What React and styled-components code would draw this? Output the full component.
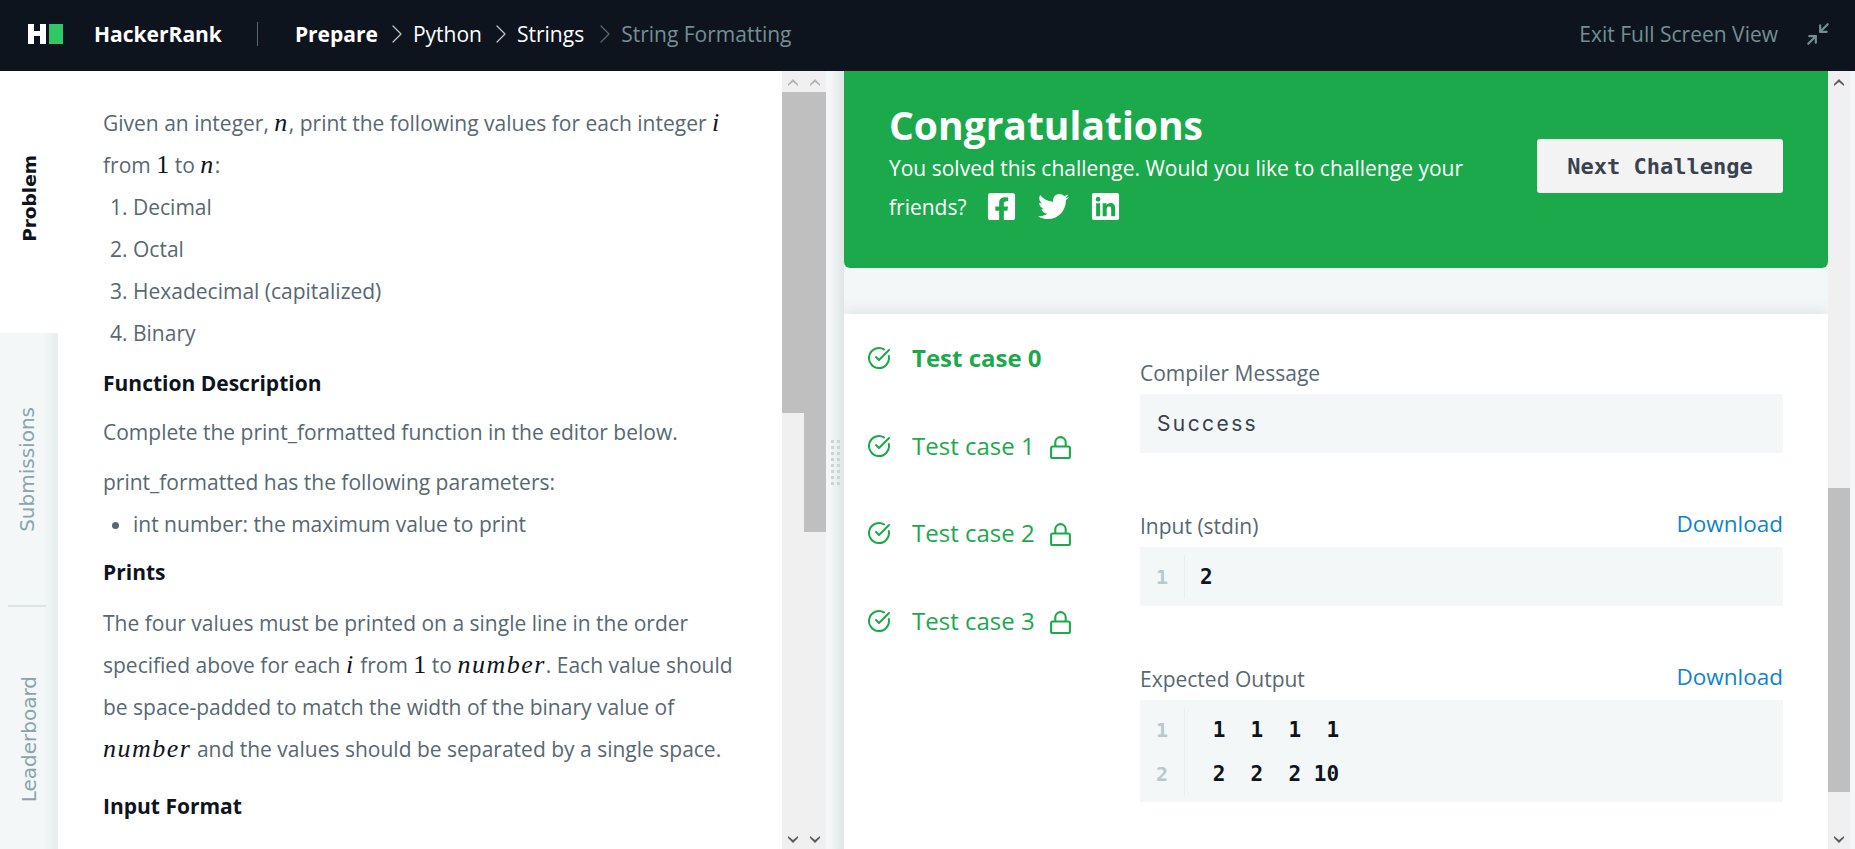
import React from 'react';
import styled, { createGlobalStyle } from 'styled-components';
import { CircleCheckBig, Minimize2, ChevronRight } from 'lucide-react';
import { FaFacebookSquare, FaTwitter, FaLinkedin } from 'react-icons/fa';

const GlobalStyle = createGlobalStyle`
  html, body {
    margin: 0;
    padding: 0;
    height: 100%;
    overflow: hidden;
    background: #f3f7f7;
    font-family: 'Open Sans', sans-serif;
  }
  * { box-sizing: border-box; }
`;

const Page = styled.div`
  display: flex;
  flex-direction: column;
  width: 1855px;
  height: 849px;
  overflow: hidden;
`;

const Header = styled.header`
  flex: 0 0 71px;
  display: flex;
  align-items: center;
  padding: 0 24px 3px 28px;
  background: #0e141e;
  font-size: 21px;
`;

const LogoMark = styled.svg`
  width: 36px;
  height: 20px;
  margin-right: 30px;
`;

const Brand = styled.span`
  font-size: 21px;
  font-weight: 700;
  color: #fff;
`;

const Sep = styled.span`
  width: 1px;
  height: 24px;
  margin: 0 37px 0 35px;
  background: #576871;
`;

const Crumb = styled.span`
  font-weight: ${p => (p.$bold ? 700 : 400)};
  color: ${p => (p.$muted ? '#738f93' : '#fff')};
`;

const CrumbArrow = styled(ChevronRight)`
  width: 32px;
  height: 32px;
  margin: 0 0 0 ${p => (p.$muted ? 5 : 3)}px;
  color: ${p => (p.$muted ? '#576871' : '#b7c9cc')};
  stroke-width: 0.9;
`;

const ExitLink = styled.span`
  margin-left: auto;
  color: #738f93;
`;

const ExitIcon = styled(Minimize2)`
  width: 26px;
  height: 26px;
  margin-left: 27px;
  color: #738f93;
`;

const Main = styled.div`
  flex: 1;
  display: flex;
  min-height: 0;
`;

const Tabs = styled.nav`
  flex: 0 0 58px;
  display: flex;
  flex-direction: column;
  overflow: hidden;
  background: linear-gradient(90deg, #f3f7f7 75%, #e7eced);
`;

const Tab = styled.div`
  flex: 0 0 ${p => p.$h}px;
  display: flex;
  align-items: center;
  justify-content: center;
  padding-bottom: ${p => (p.$active ? 7 : 0)}px;
  background: ${p => (p.$active ? '#fff' : 'transparent')};
  border-bottom: ${p => (p.$divider ? '2px solid #dbe5e6' : '0')};
  margin: ${p => (p.$divider ? '0 12px 0 8px' : '0')};
`;

const TabLabel = styled.span`
  writing-mode: vertical-rl;
  transform: rotate(180deg);
  font-family: 'DejaVu Sans', sans-serif;
  font-size: ${p => (p.$active ? 18.5 : 20)}px;
  font-weight: ${p => (p.$active ? 700 : 400)};
  color: ${p => (p.$active ? '#0e141e' : '#8aa5a9')};
`;

const Problem = styled.section`
  flex: 0 0 724px;
  padding: 31px 0 0 45px;
  background: #fff;
  overflow: hidden;
  font-size: 21px;
  line-height: 42px;
  color: #576871;
`;

const Para = styled.p`
  margin: 0 ${p => p.$right || 0}px ${p => p.$after || 0}px 0;
`;

const Heading = styled.h3`
  margin: ${p => p.$top || 0}px 0 ${p => p.$after || 0}px;
  font-size: 21px;
  line-height: 42px;
  font-weight: 700;
  color: #0e141e;
`;

const Steps = styled.ol`
  margin: 0;
  padding: 0 0 0 30px;
`;

const Bullets = styled.ul`
  margin: 0;
  padding: 0 0 0 30px;
`;

const Math = styled.i`
  font-family: 'Liberation Serif', serif;
  font-size: 26px;
  letter-spacing: ${p => (p.$upright ? 0 : 1.5)}px;
  font-style: ${p => (p.$upright ? 'normal' : 'italic')};
  color: #0e141e;
`;

const ScrollTrack = styled.div`
  flex: 0 0 22px;
  display: flex;
  flex-direction: column;
  background: #f0f0f0;
`;

const ScrollButton = styled.svg`
  flex: 0 0 21px;
  width: 22px;
  height: 21px;
  fill: ${p => (p.$dim ? '#b4b4b4' : '#5a5a5a')};
`;

const Thumb = styled.div`
  flex: 0 0 ${p => p.$h}px;
  margin-top: ${p => p.$top || 0}px;
  background: #bfbfbf;
`;

const Filler = styled.div`
  flex: 1;
`;

const Splitter = styled.div`
  flex: 0 0 18px;
  display: flex;
  align-items: center;
  justify-content: center;
  padding-top: 4px;
  background: linear-gradient(90deg, #f3f7f7 22%, #dfe4e5);
`;

const Grip = styled.div`
  display: grid;
  grid-template-columns: repeat(2, 3px);
  gap: 3px;
`;

const GripDot = styled.span`
  width: 3px;
  height: 3px;
  background: #cfd3d4;
`;

const Result = styled.section`
  flex: 0 0 984px;
  display: flex;
  flex-direction: column;
  overflow: hidden;
  background: #f3f7f7;
`;

const Banner = styled.div`
  flex: 0 0 197px;
  display: flex;
  align-items: flex-start;
  justify-content: space-between;
  padding: 30px 45px 0 45px;
  background: #1ba94c;
  border-radius: 0 0 6px 6px;
  color: #fff;
`;

const BannerText = styled.div`
  width: 600px;
`;

const BannerTitle = styled.h1`
  margin: 0;
  font-size: 39px;
  line-height: 48px;
  font-weight: 700;
`;

const BannerSub = styled.p`
  margin: 0;
  font-size: 21px;
  line-height: 39px;
`;

const Social = styled.span`
  display: inline-flex;
  vertical-align: middle;
  gap: 21px;
  margin: 0 0 6px 19px;
`;

const NextButton = styled.button`
  width: 246px;
  height: 54px;
  margin-top: 38px;
  border: 0;
  border-radius: 3px;
  background: #f3f3f3;
  font-family: 'DejaVu Sans Mono', monospace;
  font-size: 22px;
  font-weight: 700;
  color: #39424e;
`;

const Card = styled.div`
  flex: 1;
  display: flex;
  margin-top: 46px;
  padding: 21px 45px 0 23px;
  background: #fff;
  box-shadow: 0 -2px 14px rgba(57, 66, 78, 0.12);
`;

const CaseList = styled.div`
  flex: 0 0 273px;
  display: flex;
  flex-direction: column;
`;

const CaseRow = styled.div`
  height: 87.5px;
  padding-top: 1px;
  display: flex;
  align-items: flex-start;
  color: #1ba94c;
  font-size: 24px;
  line-height: 44px;
  font-weight: ${p => (p.$active ? 700 : 400)};
`;

const CheckIcon = styled(CircleCheckBig)`
  width: 24px;
  height: 24px;
  margin: 10px 21px 0 0;
  stroke-width: 2;
`;

const LockIcon = styled.svg`
  width: 21px;
  height: 24px;
  margin: 11px 0 0 15px;
  fill: none;
  stroke: #1ba94c;
  stroke-width: 2;
`;

const Outputs = styled.div`
  flex: 1;
  padding-top: 18px;
`;

const Block = styled.div`
  margin-bottom: ${p => p.$after || 0}px;
`;

const BlockHead = styled.div`
  display: flex;
  justify-content: space-between;
  align-items: center;
  height: 34px;
  margin: 3px 0 4px;
  font-size: 21px;
  color: #576871;
`;

const DownloadLink = styled.a`
  padding-bottom: 6px;
  font-size: 22.5px;
  color: #1083c9;
`;

const MessageBox = styled.div`
  height: 59px;
  padding-left: 17px;
  background: #f3f7f7;
  font-family: 'Inter', sans-serif;
  font-size: 21px;
  letter-spacing: 2.4px;
  line-height: 59px;
  color: #39424e;
`;

const CodeBox = styled.div`
  min-height: 59px;
  padding: 8px 0 6px;
  background: #f3f7f7;
  display: grid;
  grid-template-columns: 45px 1fr;
`;

const LineNo = styled.div`
  height: 44px;
  border-right: 1px solid #e7eeef;
  text-align: center;
  font-family: 'DejaVu Sans Mono', monospace;
  font-size: 20px;
  font-weight: 700;
  line-height: 44px;
  color: #b7c9cc;
`;

const CodeLine = styled.pre`
  height: 44px;
  margin: 0;
  padding-left: 15px;
  font-family: 'DejaVu Sans Mono', monospace;
  font-size: 21px;
  font-weight: 700;
  line-height: 44px;
  color: #0e141e;
`;

const Up = ({ dim }) => (
  <ScrollButton viewBox="0 0 22 21" $dim={dim}>
    <path d="M11 8l5 5v2l-5-4-5 4v-2z" />
  </ScrollButton>
);

const Down = () => (
  <ScrollButton viewBox="0 0 22 21">
    <path d="M11 15l-5-5V8l5 4 5-4v2z" />
  </ScrollButton>
);

const Lock = () => (
  <LockIcon viewBox="0 0 20 23">
    <rect x="1" y="11" width="18" height="11" rx="1.5" />
    <path d="M5 11V7a5 5 0 0 1 10 0v4" />
  </LockIcon>
);

const Code = ({ lines }) => (
  <CodeBox>
    {lines.map((line, i) => (
      <React.Fragment key={i}>
        <LineNo>{i + 1}</LineNo>
        <CodeLine>{line}</CodeLine>
      </React.Fragment>
    ))}
  </CodeBox>
);

const cases = [0, 1, 2, 3];

export default function App() {
  return (
    <Page>
      <GlobalStyle />
      <Header>
        <LogoMark viewBox="0 0 36 20">
          <path fill="#fff" d="M0 0h6v7h6V0h6v20h-6v-8H6v8H0z" />
          <rect x="21" y="0" width="14" height="20" fill="#2ec866" />
        </LogoMark>
        <Brand>HackerRank</Brand>
        <Sep />
        <Crumb $bold>Prepare</Crumb>
        <CrumbArrow />
        <Crumb>Python</Crumb>
        <CrumbArrow />
        <Crumb>Strings</Crumb>
        <CrumbArrow $muted />
        <Crumb $muted>String Formatting</Crumb>
        <ExitLink>Exit Full Screen View</ExitLink>
        <ExitIcon />
      </Header>
      <Main>
        <Tabs>
          <Tab $active $h={262}>
            <TabLabel $active>Problem</TabLabel>
          </Tab>
          <Tab $h={274} $divider>
            <TabLabel>Submissions</TabLabel>
          </Tab>
          <Tab $h={264}>
            <TabLabel>Leaderboard</TabLabel>
          </Tab>
        </Tabs>
        <Problem>
          <Para>
            Given an integer, <Math>n</Math>, print the following values for each integer <Math>i</Math>
            <br />
            from <Math $upright>1</Math> to <Math>n</Math>:
          </Para>
          <Steps>
            <li>Decimal</li>
            <li>Octal</li>
            <li>Hexadecimal (capitalized)</li>
            <li>Binary</li>
          </Steps>
          <Heading $top={8} $after={7}>Function Description</Heading>
          <Para $after={8}>Complete the print_formatted function in the editor below.</Para>
          <Para>print_formatted has the following parameters:</Para>
          <Bullets>
            <li>int number: the maximum value to print</li>
          </Bullets>
          <Heading $top={6} $after={9}>Prints</Heading>
          <Para $right={34}>
            The four values must be printed on a single line in the order specified above for each <Math>i</Math> from{' '}
            <Math $upright>1</Math> to <Math>number</Math>. Each value should be space-padded to match the width of the
            binary value of <Math>number</Math> and the values should be separated by a single space.
          </Para>
          <Heading $top={15}>Input Format</Heading>
        </Problem>
        <ScrollTrack>
          <Up dim />
          <Thumb $h={321} />
          <Filler />
          <Down />
        </ScrollTrack>
        <ScrollTrack>
          <Up dim />
          <Thumb $h={440} />
          <Filler />
          <Down />
        </ScrollTrack>
        <Splitter>
          <Grip>
            {Array.from({ length: 16 }, (_, i) => (
              <GripDot key={i} />
            ))}
          </Grip>
        </Splitter>
        <Result>
          <Banner>
            <BannerText>
              <BannerTitle>Congratulations</BannerTitle>
              <BannerSub>
                You solved this challenge. Would you like to challenge your friends?
                <Social>
                  <FaFacebookSquare size={31} />
                  <FaTwitter size={31} />
                  <FaLinkedin size={31} />
                </Social>
              </BannerSub>
            </BannerText>
            <NextButton>Next Challenge</NextButton>
          </Banner>
          <Card>
            <CaseList>
              {cases.map(n => (
                <CaseRow key={n} $active={n === 0}>
                  <CheckIcon />
                  Test case {n}
                  {n > 0 && <Lock />}
                </CaseRow>
              ))}
            </CaseList>
            <Outputs>
              <Block $after={56}>
                <BlockHead>Compiler Message</BlockHead>
                <MessageBox>Success</MessageBox>
              </Block>
              <Block $after={56}>
                <BlockHead>
                  Input (stdin)
                  <DownloadLink>Download</DownloadLink>
                </BlockHead>
                <Code lines={['2']} />
              </Block>
              <Block>
                <BlockHead>
                  Expected Output
                  <DownloadLink>Download</DownloadLink>
                </BlockHead>
                <Code lines={[' 1  1  1  1', ' 2  2  2 10']} />
              </Block>
            </Outputs>
          </Card>
        </Result>
        <ScrollTrack>
          <Up />
          <Thumb $h={304} $top={396} />
          <Filler />
          <Down />
        </ScrollTrack>
      </Main>
    </Page>
  );
}
